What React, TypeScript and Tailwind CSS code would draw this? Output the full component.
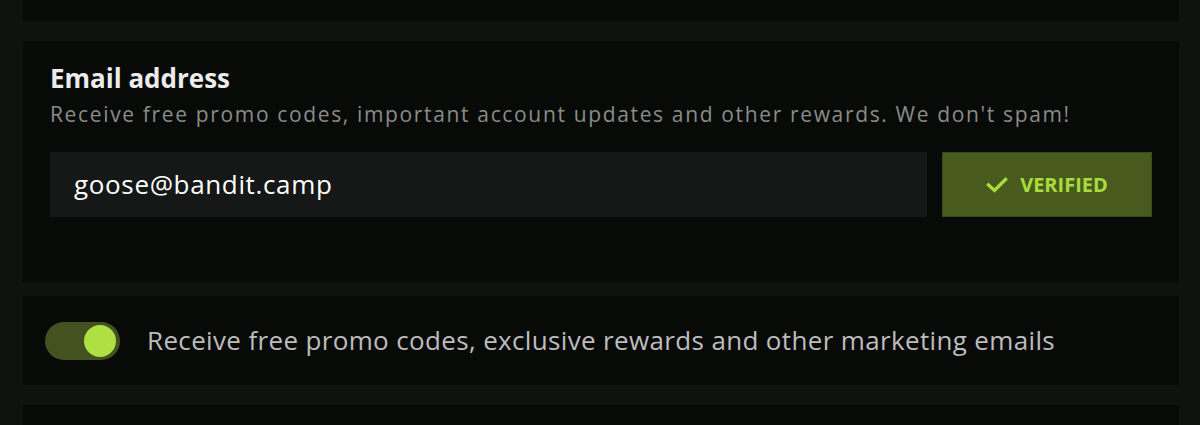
import React from 'react';

const font = { fontFamily: '"Open Sans", "Noto Sans", sans-serif' };

function Toggle({ on }: { on: boolean }) {
  return (
    <div
      className={`flex h-[38px] w-[75px] shrink-0 items-center rounded-full px-[4px] ${
        on ? 'justify-end bg-[#44521f]' : 'justify-start bg-[#2a2d2a]'
      }`}
    >
      <div className="h-[32px] w-[32px] rounded-full bg-[#aee044]" />
    </div>
  );
}

export default function App() {
  return (
    <div className="h-[425px] w-[1200px] overflow-hidden bg-[#101210] pl-[23px] pr-[21px]" style={font}>
      <div className="flex flex-col">
        <div className="mt-[-20px] h-[41px] bg-[#080a08]" />

        <section className="mt-[20px] h-[241px] bg-[#080a08] px-[27px] pt-[22px]">
          <h3 className="text-[26px] font-bold leading-[30px] text-[#ececec]">Email address</h3>
          <p className="mt-[7px] text-[21px] leading-[28px] tracking-[1.65px] text-[#8a8c8a]">
            Receive free promo codes, important account updates and other rewards. We don't spam!
          </p>
          <div className="mt-[24px] flex gap-[15px]">
            <div className="flex h-[65px] flex-1 items-center bg-[#151816] px-[24px] text-[26px] tracking-[0.65px] text-white">
              goose@bandit.camp
            </div>
            <button className="flex h-[65px] w-[210px] items-center justify-center gap-[12px] border border-[#3a4a16] bg-[#485a1e] text-[20px] font-bold text-[#a8dc3c]">
              <svg width="22" height="16" viewBox="0 0 22 16" fill="none">
                <path d="M2.5 8 L8.5 13.5 L19.5 2.5" stroke="#a8dc3c" strokeWidth="3.4" strokeLinecap="square" />
              </svg>
              VERIFIED
            </button>
          </div>
        </section>

        <section className="mt-[14px] flex h-[89px] items-center gap-[27px] bg-[#080a08] px-[22px]">
          <Toggle on />
          <span className="text-[26px] tracking-[0.35px] text-[#bdbdbd]">
            Receive free promo codes, exclusive rewards and other marketing emails
          </span>
        </section>

        <div className="mt-[20px] h-[40px] bg-[#080a08]" />
      </div>
    </div>
  );
}
